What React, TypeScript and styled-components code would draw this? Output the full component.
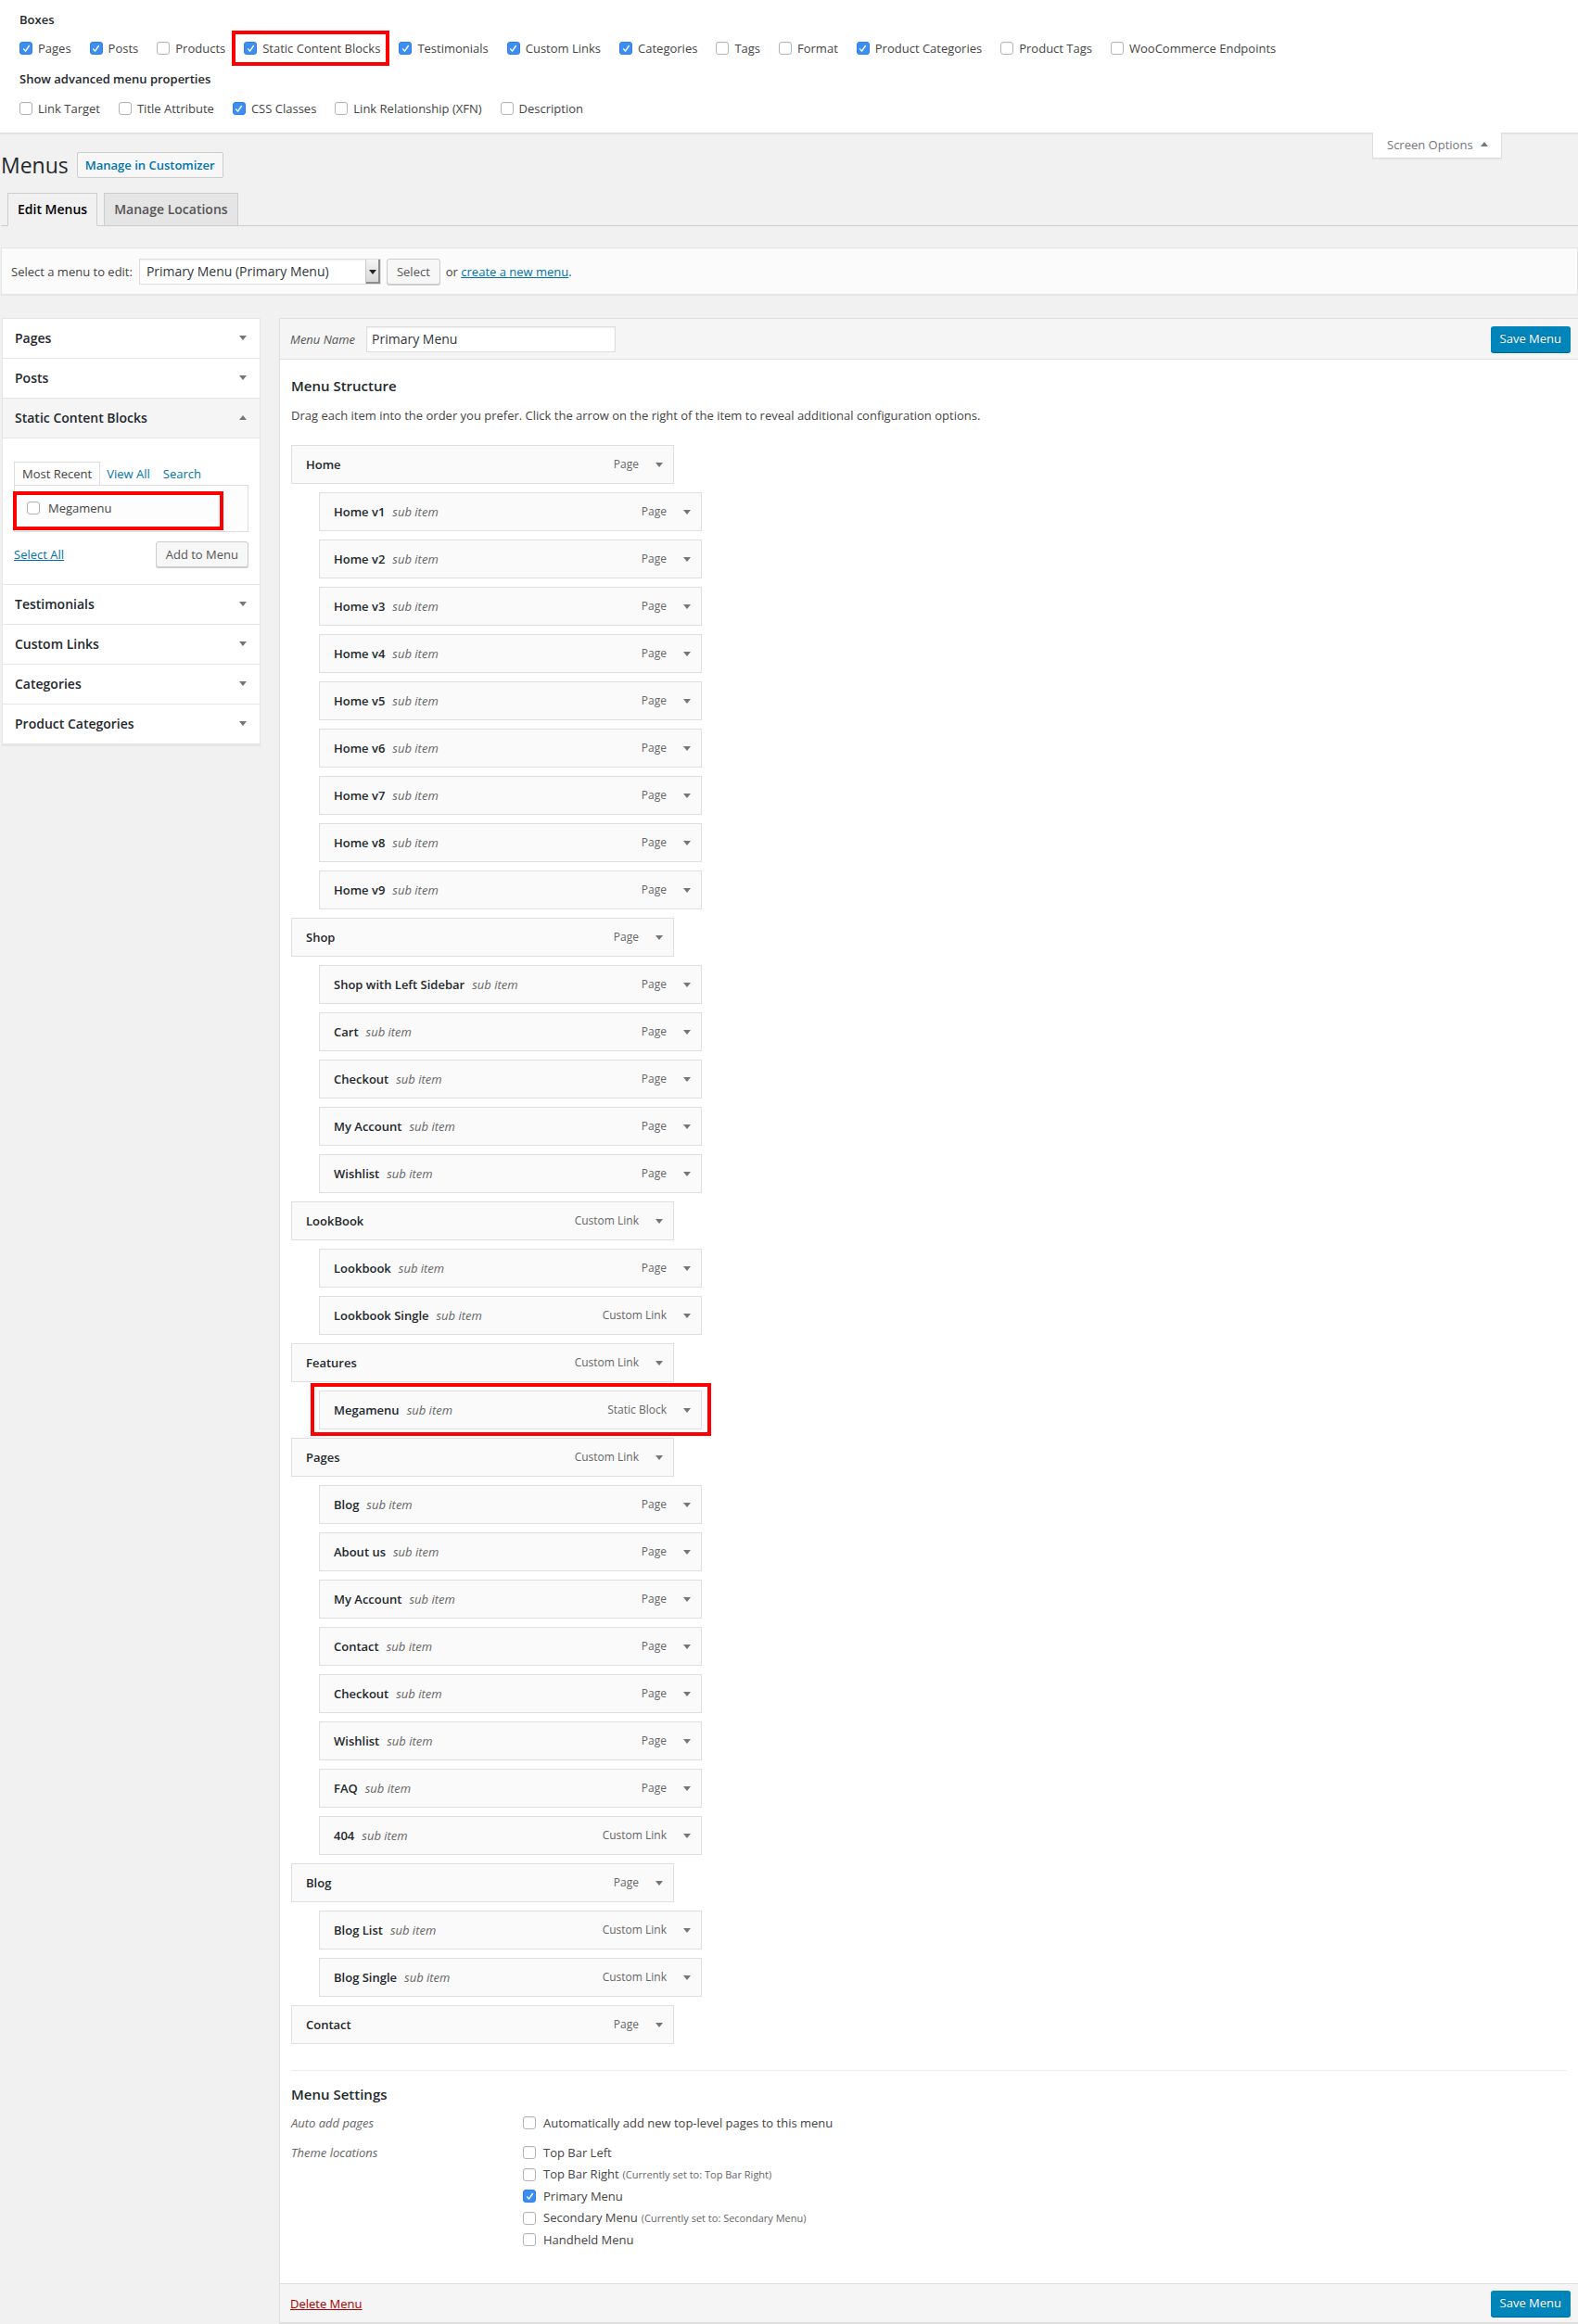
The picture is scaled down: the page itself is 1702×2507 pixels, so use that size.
import React from 'react'
import styled, { createGlobalStyle } from 'styled-components'

const GlobalStyle = createGlobalStyle`
  html, body {
    margin: 0;
    padding: 0;
    overflow: hidden;
  }
  body {
    background: #f1f1f1;
    font-family: "Open Sans", "Liberation Sans", sans-serif;
    font-size: 13px;
    line-height: 20px;
    color: #444;
  }
  * { box-sizing: border-box; }
`

// data
const boxes: [string, boolean][] = [
    ['Pages', true], ['Posts', true], ['Products', false], ['Static Content Blocks', true],
    ['Testimonials', true], ['Custom Links', true], ['Categories', true], ['Tags', false],
    ['Format', false], ['Product Categories', true], ['Product Tags', false], ['WooCommerce Endpoints', false],
]
const advanced: [string, boolean][] = [
    ['Link Target', false], ['Title Attribute', false], ['CSS Classes', true],
    ['Link Relationship (XFN)', false], ['Description', false],
]
const sections = ['Pages', 'Posts', 'Static Content Blocks', 'Testimonials', 'Custom Links', 'Categories', 'Product Categories']

type Item = { title: string, type: string, sub?: boolean, mark?: boolean }
const items: Item[] = [
    { title: 'Home', type: 'Page' },
    ...[1, 2, 3, 4, 5, 6, 7, 8, 9].map(n => ({ title: `Home v${n}`, type: 'Page', sub: true })),
    { title: 'Shop', type: 'Page' },
    { title: 'Shop with Left Sidebar', type: 'Page', sub: true },
    { title: 'Cart', type: 'Page', sub: true },
    { title: 'Checkout', type: 'Page', sub: true },
    { title: 'My Account', type: 'Page', sub: true },
    { title: 'Wishlist', type: 'Page', sub: true },
    { title: 'LookBook', type: 'Custom Link' },
    { title: 'Lookbook', type: 'Page', sub: true },
    { title: 'Lookbook Single', type: 'Custom Link', sub: true },
    { title: 'Features', type: 'Custom Link' },
    { title: 'Megamenu', type: 'Static Block', sub: true, mark: true },
    { title: 'Pages', type: 'Custom Link' },
    { title: 'Blog', type: 'Page', sub: true },
    { title: 'About us', type: 'Page', sub: true },
    { title: 'My Account', type: 'Page', sub: true },
    { title: 'Contact', type: 'Page', sub: true },
    { title: 'Checkout', type: 'Page', sub: true },
    { title: 'Wishlist', type: 'Page', sub: true },
    { title: 'FAQ', type: 'Page', sub: true },
    { title: '404', type: 'Custom Link', sub: true },
    { title: 'Blog', type: 'Page' },
    { title: 'Blog List', type: 'Custom Link', sub: true },
    { title: 'Blog Single', type: 'Custom Link', sub: true },
    { title: 'Contact', type: 'Page' },
]
const locations: { name: string, checked?: boolean, note?: string }[] = [
    { name: 'Top Bar Left' },
    { name: 'Top Bar Right', note: '(Currently set to: Top Bar Right)' },
    { name: 'Primary Menu', checked: true },
    { name: 'Secondary Menu', note: '(Currently set to: Secondary Menu)' },
    { name: 'Handheld Menu' },
]

//small drawings
const Box = styled.span<{ $checked?: boolean }>`
    width: 14px;
    height: 14px;
    flex-shrink: 0;
    border-radius: 3px;
    display: inline-flex;
    align-items: center;
    justify-content: center;
    background: ${p => p.$checked ? '#3d8ef3' : '#fff'};
    border: 1px solid ${p => p.$checked ? '#2f7fe6' : '#b4b4b4'};
    box-shadow: ${p => p.$checked ? 'none' : 'inset 0 1px 1px rgba(0,0,0,.05)'};
`
function Check({ checked }: { checked?: boolean }) {
    return (
        <Box $checked={checked}>
            {checked && (
                <svg width="9" height="9" viewBox="0 0 9 9">
                    <path d="M1.6 4.9 L3.5 7.1 L7.4 1.5" stroke="#fff" strokeWidth="1.4" fill="none" strokeLinecap="round" strokeLinejoin="round" />
                </svg>
            )}
        </Box>
    )
}

const TriIcon = styled.svg`
    flex-shrink: 0;
    display: block;
`
function Tri({ up, color = '#72777c' }: { up?: boolean, color?: string }) {
    return (
        <TriIcon width="8" height="5" viewBox="0 0 8 5">
            <polygon points={up ? '0,5 8,5 4,0' : '0,0 8,0 4,5'} fill={color} />
        </TriIcon>
    )
}

// red annotation frame
const Mark = styled.span<{ $t: number, $r: number, $b: number, $l: number }>`
    position: absolute;
    top: ${p => p.$t}px;
    right: ${p => p.$r}px;
    bottom: ${p => p.$b}px;
    left: ${p => p.$l}px;
    border: 4px solid #ff0000;
    pointer-events: none;
`

// screen options
const ScreenMeta = styled.div`
    height: 144px;
    background: #fff;
    border-bottom: 1px solid #ddd;
    box-shadow: 0 1px 1px rgba(0,0,0,.04);
    padding: 11px 21px 0;
`
const Legend = styled.div<{ $top?: number }>`
    margin-top: ${p => p.$top || 0}px;
    font-weight: 600;
    color: #23282d;
    line-height: 20px;
`
const PrefsRow = styled.div<{ $top: number }>`
    display: flex;
    margin-top: ${p => p.$top}px;
    line-height: 20px;
`
const CheckLabel = styled.label<{ $gap: number, $right?: number }>`
    position: relative;
    display: inline-flex;
    align-items: center;
    gap: ${p => p.$gap}px;
    margin-right: ${p => p.$right || 0}px;
    white-space: nowrap;
`

// page
const Wrap = styled.div`
    position: relative;
    display: flow-root;
    margin-left: 1px;
`
const ScreenTab = styled.div`
    position: absolute;
    top: -1px;
    right: 82px;
    width: 140px;
    height: 28px;
    background: #fff;
    border: 1px solid #ddd;
    border-top: none;
    box-shadow: 0 1px 1px rgba(0,0,0,.04);
    display: flex;
    align-items: center;
    justify-content: space-between;
    padding: 0 14px 2px 15px;
    color: #72777c;
`
const TitleRow = styled.div`
    display: flex;
    align-items: center;
    gap: 9px;
    margin-top: 20px;
    height: 28px;
    h1 {
        margin: 0;
        font-size: 23px;
        font-weight: 400;
        line-height: 28px;
        color: #23282d;
    }
`
const Button = styled.span<{ $primary?: boolean, $link?: boolean }>`
    display: inline-flex;
    align-items: center;
    height: 28px;
    padding: 0 ${p => p.$link ? 8 : 10}px 1px;
    border: 1px solid ${p => p.$primary ? '#0073aa #006799 #006799' : '#ccc'};
    border-radius: ${p => p.$link ? 2 : 3}px;
    background: ${p => p.$primary ? '#0085ba' : '#f7f7f7'};
    box-shadow: ${p => p.$primary ? '0 1px 0 #006799' : p.$link ? 'none' : '0 1px 0 #ccc'};
    color: ${p => p.$primary ? '#fff' : p.$link ? '#0073aa' : '#555'};
    font-weight: ${p => p.$link ? 600 : 400};
    text-shadow: ${p => p.$primary ? '0 -1px 1px #006799' : 'none'};
    white-space: nowrap;
    flex-shrink: 0;
`
const TabBar = styled.div`
    display: flex;
    align-items: flex-end;
    margin-top: 16px;
    padding-left: 7px;
    border-bottom: 1px solid #ccc;
`
const Tab = styled.span<{ $active?: boolean }>`
    margin-right: 7px;
    margin-bottom: ${p => p.$active ? -1 : 0}px;
    padding: 5px 10px;
    border: 1px solid #ccc;
    border-bottom: ${p => p.$active ? '1px solid #f1f1f1' : 'none'};
    background: ${p => p.$active ? '#f1f1f1' : '#e5e5e5'};
    color: ${p => p.$active ? '#000' : '#555'};
    font-size: 14px;
    font-weight: 600;
    line-height: 24px;
`
const ManageBar = styled.div`
    display: flex;
    align-items: center;
    margin-top: 23px;
    padding: 11px 10px 10px;
    background: #fbfbfb;
    border: 1px solid #e5e5e5;
    box-shadow: 0 1px 1px rgba(0,0,0,.04);
    .label { margin-right: 7px; }
    .or { margin-left: 6px; }
    a { color: #0073aa; text-decoration: underline; }
`
const SelectBox = styled.div`
    display: flex;
    width: 261px;
    height: 28px;
    margin-right: 6px;
    background: #fff;
    border: 1px solid #ddd;
    box-shadow: inset 0 1px 2px rgba(0,0,0,.07);
    font-size: 14px;
    color: #32373c;
    .value {
        flex: 1;
        padding-left: 7px;
        line-height: 26px;
    }
    .arrow {
        width: 16px;
        display: flex;
        align-items: center;
        justify-content: center;
        background: linear-gradient(#f4f4f4, #d6d6d6);
        border-left: 1px solid #c8c8c8;
        box-shadow: inset -2px -2px 0 #8c8c8c;
    }
`
const Columns = styled.div`
    display: flex;
    align-items: flex-start;
    margin-top: 25px;
`

// sidebar
const Sidebar = styled.div`
    width: 279px;
    flex-shrink: 0;
    margin-left: 1px;
    background: #fff;
    border: 1px solid #e5e5e5;
    box-shadow: 0 1px 1px rgba(0,0,0,.04);
`
const SectionHead = styled.div<{ $open?: boolean }>`
    display: flex;
    align-items: center;
    justify-content: space-between;
    height: 43px;
    padding: 0 14px 1px 13px;
    border-bottom: 1px solid #e5e5e5;
    background: ${p => p.$open ? '#f5f5f5' : '#fff'};
    font-size: 14px;
    font-weight: 600;
    color: #23282d;
`
const SectionBody = styled.div`
    padding: 25px 12px 18px;
    border-bottom: 1px solid #e5e5e5;
`
const SideTabs = styled.div`
    display: flex;
    align-items: flex-end;
    height: 25px;
    span {
        padding: 0 7px;
        line-height: 24px;
        color: #0073aa;
    }
    .current {
        padding: 0 8px;
        margin-bottom: -1px;
        background: #fdfdfd;
        border: 1px solid #ddd;
        border-bottom: 1px solid #fdfdfd;
        color: #444;
    }
`
const TabPanel = styled.div`
    position: relative;
    padding: 15px 13px 14px;
    background: #fdfdfd;
    border: 1px solid #ddd;
    line-height: 18px;
`
const SideActions = styled.div`
    display: flex;
    align-items: center;
    justify-content: space-between;
    margin-top: 10px;
    a { color: #0073aa; text-decoration: underline; }
`

// menu management
const Panel = styled.div`
    flex: 1;
    margin-left: 20px;
    background: #fff;
    border: 1px solid #dfdfdf;
    border-right: none;
    box-shadow: 0 1px 1px rgba(0,0,0,.04);
`
const PanelBar = styled.div<{ $foot?: boolean }>`
    display: flex;
    align-items: center;
    height: ${p => p.$foot ? 43 : 44}px;
    padding: 0 8px 0 11px;
    background: #f5f5f5;
    border-top: ${p => p.$foot ? '1px solid #dfdfdf' : 'none'};
    border-bottom: 1px solid #dfdfdf;
    .name-label {
        font-style: italic;
        color: #555;
        margin-right: 12px;
    }
    .delete {
        color: #a00;
        text-decoration: underline;
    }
    ${Button} { margin-left: auto; }
`
const NameInput = styled.div`
    width: 269px;
    height: 28px;
    padding: 0 5px;
    background: #fff;
    border: 1px solid #ddd;
    box-shadow: inset 0 1px 2px rgba(0,0,0,.07);
    font-size: 14px;
    line-height: 26px;
    color: #32373c;
`
const PanelBody = styled.div`
    display: flow-root;
    padding: 0 12px 37px;
`
const Heading = styled.h3<{ $top: number }>`
    margin: ${p => p.$top}px 0 0;
    font-size: 15px;
    font-weight: 600;
    line-height: 20px;
    color: #23282d;
`
const Hint = styled.p`
    margin: 12px 0 0;
`
const MenuList = styled.div`
    padding-top: 13px;
`
const MenuItem = styled.div<{ $sub?: boolean }>`
    position: relative;
    width: 413px;
    margin-top: 9px;
    margin-left: ${p => p.$sub ? 30 : 0}px;
    display: flex;
    align-items: center;
    height: 42px;
    padding: 0 11px 0 15px;
    background: #fafafa;
    border: 1px solid #dfdfdf;
    .title {
        font-weight: 600;
        color: #23282d;
    }
    .sub {
        margin-left: 8px;
        font-style: italic;
        color: #666;
    }
    .type {
        margin-left: auto;
        margin-right: 18px;
        font-size: 12px;
        color: #666;
    }
`
const Divider = styled.div`
    margin-top: 28px;
    border-top: 1px solid #eee;
`
const SettingRow = styled.div<{ $top: number }>`
    display: grid;
    grid-template-columns: 250px 1fr;
    margin-top: ${p => p.$top}px;
    .what {
        font-style: italic;
        color: #666;
    }
`
const Options = styled.div`
    display: flex;
    flex-direction: column;
    gap: 3px;
    .note {
        margin-left: 4px;
        font-size: 11px;
        color: #666;
    }
`

function App() {
    return (
        <>
            <GlobalStyle />
            <ScreenMeta>
                <Legend>Boxes</Legend>
                <PrefsRow $top={11}>
                    {boxes.map(([name, on]) => (
                        <CheckLabel key={name} $gap={6} $right={20}>
                            <Check checked={on} />
                            {name}
                            {name === 'Static Content Blocks' && <Mark $t={-9} $r={-10} $b={-9} $l={-13} />}
                        </CheckLabel>
                    ))}
                </PrefsRow>
                <Legend $top={13}>Show advanced menu properties</Legend>
                <PrefsRow $top={12}>
                    {advanced.map(([name, on]) => (
                        <CheckLabel key={name} $gap={6} $right={20}>
                            <Check checked={on} />
                            {name}
                        </CheckLabel>
                    ))}
                </PrefsRow>
            </ScreenMeta>

            <Wrap>
                <ScreenTab>Screen Options <Tri up /></ScreenTab>
                <TitleRow>
                    <h1>Menus</h1>
                    <Button $link>Manage in Customizer</Button>
                </TitleRow>
                <TabBar>
                    <Tab $active>Edit Menus</Tab>
                    <Tab>Manage Locations</Tab>
                </TabBar>
                <ManageBar>
                    <span className='label'>Select a menu to edit:</span>
                    <SelectBox>
                        <span className='value'>Primary Menu (Primary Menu)</span>
                        <span className='arrow'><Tri color='#222' /></span>
                    </SelectBox>
                    <Button>Select</Button>
                    <span className='or'>or <a>create a new menu</a>.</span>
                </ManageBar>

                <Columns>
                    <Sidebar>
                        {sections.map(s => {
                            const open = s === 'Static Content Blocks'
                            return (
                                <React.Fragment key={s}>
                                    <SectionHead $open={open}>
                                        {s}
                                        <Tri up={open} />
                                    </SectionHead>
                                    {open && (
                                        <SectionBody>
                                            <SideTabs>
                                                <span className='current'>Most Recent</span>
                                                <span>View All</span>
                                                <span>Search</span>
                                            </SideTabs>
                                            <TabPanel>
                                                <CheckLabel $gap={9}>
                                                    <Check />
                                                    Megamenu
                                                </CheckLabel>
                                                <Mark $t={6} $r={26} $b={1} $l={-2} />
                                            </TabPanel>
                                            <SideActions>
                                                <a>Select All</a>
                                                <Button>Add to Menu</Button>
                                            </SideActions>
                                        </SectionBody>
                                    )}
                                </React.Fragment>
                            )
                        })}
                    </Sidebar>

                    <Panel>
                        <PanelBar>
                            <span className='name-label'>Menu Name</span>
                            <NameInput>Primary Menu</NameInput>
                            <Button $primary>Save Menu</Button>
                        </PanelBar>
                        <PanelBody>
                            <Heading $top={18}>Menu Structure</Heading>
                            <Hint>Drag each item into the order you prefer. Click the arrow on the right of the item to reveal additional configuration options.</Hint>
                            <MenuList>
                                {items.map((it, i) => (
                                    <MenuItem key={i} $sub={it.sub}>
                                        <span className='title'>{it.title}</span>
                                        {it.sub && <span className='sub'>sub item</span>}
                                        <span className='type'>{it.type}</span>
                                        <Tri />
                                        {it.mark && <Mark $t={-9} $r={-11} $b={-8} $l={-10} />}
                                    </MenuItem>
                                ))}
                            </MenuList>
                            <Divider />
                            <Heading $top={15}>Menu Settings</Heading>
                            <SettingRow $top={11}>
                                <span className='what'>Auto add pages</span>
                                <Options>
                                    <CheckLabel $gap={8}>
                                        <Check />
                                        Automatically add new top-level pages to this menu
                                    </CheckLabel>
                                </Options>
                            </SettingRow>
                            <SettingRow $top={12}>
                                <span className='what'>Theme locations</span>
                                <Options>
                                    {locations.map(l => (
                                        <CheckLabel key={l.name} $gap={8}>
                                            <Check checked={l.checked} />
                                            <span>{l.name}{l.note && <span className='note'>{l.note}</span>}</span>
                                        </CheckLabel>
                                    ))}
                                </Options>
                            </SettingRow>
                        </PanelBody>
                        <PanelBar $foot>
                            <a className='delete'>Delete Menu</a>
                            <Button $primary>Save Menu</Button>
                        </PanelBar>
                    </Panel>
                </Columns>
            </Wrap>
        </>
    )
}

export default App
